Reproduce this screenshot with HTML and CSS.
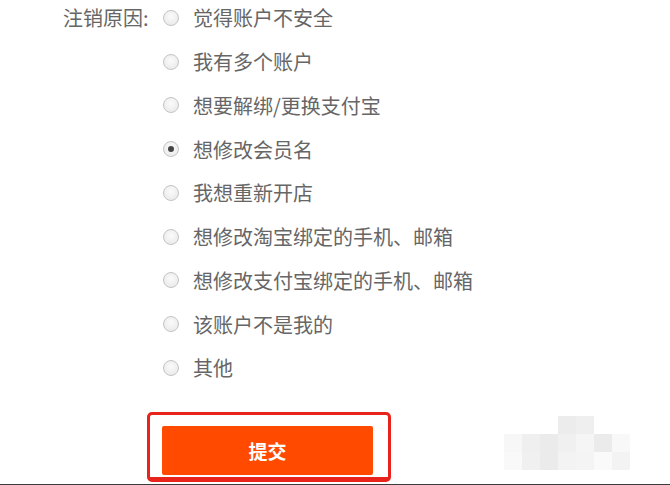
FILE: index.html
```html
<!DOCTYPE html>
<html lang="zh-CN">
  <head>
    <meta charset="UTF-8" />
    <meta name="viewport" content="width=device-width, initial-scale=1.0" />
    <title>注销账户</title>
    <link rel="stylesheet" href="styles.css">
  </head>
  <body>
    <div class="page">
      <form class="reason-form">
        <div class="field">
          <label class="field-label">注销原因:</label>
          <div class="options">
            <label class="option"><span class="radio"></span>觉得账户不安全</label>
            <label class="option"><span class="radio"></span>我有多个账户</label>
            <label class="option"><span class="radio"></span>想要解绑/更换支付宝</label>
            <label class="option"><span class="radio checked"></span>想修改会员名</label>
            <label class="option"><span class="radio"></span>我想重新开店</label>
            <label class="option"><span class="radio"></span>想修改淘宝绑定的手机、邮箱</label>
            <label class="option"><span class="radio"></span>想修改支付宝绑定的手机、邮箱</label>
            <label class="option"><span class="radio"></span>该账户不是我的</label>
            <label class="option"><span class="radio"></span>其他</label>
          </div>
        </div>

        <div class="actions">
          <div class="highlight">
            <button type="button" class="submit-btn">提交</button>
          </div>
          <div class="mosaic">
            <span class="px" style="left:54px;top:0;background:#ececec"></span>
            <span class="px" style="left:72px;top:0;background:#efefef"></span>
            <span class="px" style="left:0;top:18px;background:#f7f7f7"></span>
            <span class="px" style="left:18px;top:18px;background:#efefef"></span>
            <span class="px" style="left:36px;top:18px;background:#ebebeb"></span>
            <span class="px" style="left:54px;top:18px;background:#f0f0f0"></span>
            <span class="px" style="left:72px;top:18px;background:#f5f5f5"></span>
            <span class="px" style="left:90px;top:18px;background:#ebebeb"></span>
            <span class="px" style="left:108px;top:18px;background:#f8f8f8"></span>
            <span class="px" style="left:0;top:36px;background:#f9f9f9"></span>
            <span class="px" style="left:18px;top:36px;background:#f0f0f0"></span>
            <span class="px" style="left:36px;top:36px;background:#ebebeb"></span>
            <span class="px" style="left:54px;top:36px;background:#f3f3f3"></span>
            <span class="px" style="left:72px;top:36px;background:#f4f4f4"></span>
            <span class="px" style="left:90px;top:36px;background:#fafafa"></span>
            <span class="px" style="left:108px;top:36px;background:#f3f3f3"></span>
          </div>
        </div>
      </form>
      <div class="bottom-bar"></div>
    </div>
  </body>
</html>
```

FILE: styles.css
```css
body {
  margin: 0;
  background-color: #fff;
  font-family: "Noto Sans CJK SC", "Noto Sans", sans-serif;
  color: #666;
  overflow: hidden;
}

.page {
  width: 670px;
  height: 485px;
  overflow: hidden;
}

.reason-form {
  margin-top: -4px;
}

.field {
  display: flex;
  padding-left: 63px;
}

.field-label {
  width: 100px;
  height: 44px;
  line-height: 44px;
  font-size: 20px;
  white-space: nowrap;
}

.options {
  display: flex;
  flex-direction: column;
}

.option {
  display: flex;
  align-items: center;
  height: 43.75px;
  font-size: 20px;
  white-space: nowrap;
}

.radio {
  position: relative;
  width: 16px;
  height: 16px;
  margin-right: 14px;
  border: 1px solid #c4c4c4;
  border-radius: 50%;
  background: radial-gradient(circle at 50% 40%, #fbfbfb 0%, #e6e6e6 100%);
  box-sizing: border-box;
  flex: none;
}

.radio.checked::after {
  content: "";
  position: absolute;
  left: 4px;
  top: 4px;
  width: 6px;
  height: 6px;
  border-radius: 50%;
  background-color: #444;
}

.actions {
  position: relative;
  margin-top: 22px;
  padding-left: 147px;
}

.highlight {
  width: 244px;
  height: 70px;
  padding: 11px 15px 0 12px;
  border: 3px solid #e8231c;
  border-bottom-width: 5px;
  border-radius: 5px;
  box-sizing: border-box;
}

.submit-btn {
  display: block;
  width: 211px;
  height: 49px;
  border: none;
  border-radius: 2px;
  background-color: #ff4a00;
  color: #fff;
  font-family: "Noto Sans CJK SC", sans-serif;
  font-size: 19px;
  font-weight: bold;
  cursor: pointer;
}

.mosaic {
  position: absolute;
  left: 504px;
  top: 4px;
  width: 126px;
  height: 54px;
}

.px {
  position: absolute;
  width: 18px;
  height: 18px;
}

.bottom-bar {
  margin-top: 2px;
  height: 4px;
  background-color: #3c3c3c;
}
```
